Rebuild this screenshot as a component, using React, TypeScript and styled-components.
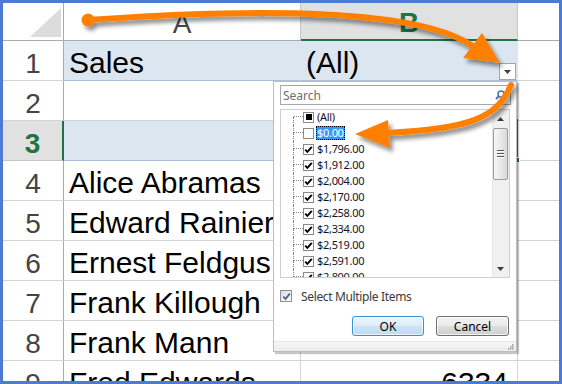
import React from 'react';
import styled, { createGlobalStyle } from 'styled-components';

const GlobalStyle = createGlobalStyle`
  html, body { margin: 0; padding: 0; background: #fff; }
  body { width: 562px; height: 384px; overflow: hidden; font-family: "Liberation Sans", Arial, sans-serif; }
  * { box-sizing: border-box; }
`;

const GREEN = '#217346';
const GRID = '#d4d4d4';

const Frame = styled.div`
  position: relative;
  width: 562px;
  height: 384px;
  border: 3px solid #4b7bd3;
  overflow: hidden;
  background: #fff;
`;

const Sheet = styled.div`
  display: grid;
  grid-template-columns: 61px 237px 217px 1fr;
  grid-template-rows: 38px;
  grid-auto-rows: 40px;
`;

const Corner = styled.div`
  display: flex;
  align-items: flex-end;
  justify-content: flex-end;
  padding: 0 2px 3px 0;
  border-right: 1px solid #ababab;
  border-bottom: 1px solid #ababab;
`;

const CornerTriangle = styled.div`
  width: 0;
  height: 0;
  border-left: 31px solid transparent;
  border-bottom: 29px solid #dcdcdc;
`;

const ColHeader = styled.div<{ $active?: boolean; $last?: boolean }>`
  display: flex;
  align-items: center;
  justify-content: center;
  padding-top: 4px;
  font-size: 28px;
  color: ${(p) => (p.$active ? GREEN : '#444')};
  font-weight: ${(p) => (p.$active ? 700 : 400)};
  background: ${(p) => (p.$active ? '#e1e1e1' : '#fff')};
  border-right: ${(p) => (p.$last ? 'none' : '1px solid #c6c6c6')};
  border-bottom: ${(p) => (p.$active ? `2px solid ${GREEN}` : '1px solid #ababab')};
`;

const RowHeader = styled.div<{ $active?: boolean }>`
  display: flex;
  align-items: center;
  justify-content: center;
  padding-top: 6px;
  font-size: 28px;
  color: ${(p) => (p.$active ? GREEN : '#444')};
  font-weight: ${(p) => (p.$active ? 700 : 400)};
  background: ${(p) => (p.$active ? '#e1e1e1' : '#fff')};
  border-right: ${(p) => (p.$active ? `2px solid ${GREEN}` : '1px solid #ababab')};
  border-bottom: 1px solid ${(p) => (p.$active ? '#c6c6c6' : GRID)};
`;

const Cell = styled.div<{ $pivot?: boolean; $right?: boolean; $open?: boolean; $last?: boolean }>`
  position: relative;
  display: flex;
  align-items: center;
  justify-content: ${(p) => (p.$right ? 'flex-end' : 'flex-start')};
  padding: 4px ${(p) => (p.$right ? '9px' : '5px')} 0 5px;
  font-size: 30px;
  color: #000;
  white-space: nowrap;
  overflow: ${(p) => (p.$open ? 'visible' : 'hidden')};
  background: ${(p) => (p.$pivot ? '#dce6f1' : '#fff')};
  border-bottom: 1px solid ${(p) => (p.$pivot ? '#a9bfdc' : GRID)};
  border-right: ${(p) => (p.$last ? 'none' : p.$pivot ? '1px solid transparent' : `1px solid ${GRID}`)};
`;

const DropButton = styled.div`
  align-self: flex-end;
  margin-left: auto;
  margin-right: -4px;
  width: 17px;
  height: 17px;
  border: 1px solid #a6a6a6;
  background: #fff;
  display: flex;
  align-items: center;
  justify-content: center;
`;

const Selection = styled.div`
  position: absolute;
  z-index: 1;
  top: -2px;
  left: -2px;
  right: -1px;
  bottom: -1px;
  border: 2px solid ${GREEN};
`;

const FillHandle = styled.div`
  position: absolute;
  right: -4px;
  bottom: -4px;
  width: 6px;
  height: 6px;
  background: ${GREEN};
  border: 1px solid #fff;
`;

/* ---------- Filter dropdown ---------- */

const Panel = styled.div`
  position: absolute;
  z-index: 2;
  left: 270px;
  top: 78px;
  width: 244px;
  height: 271px;
  display: flex;
  flex-direction: column;
  padding: 0 5px 0 6px;
  background: #fff;
  border: 1px solid #bdbdbd;
  box-shadow: 2px 2px 1px rgba(0, 0, 0, 0.22);
  font-family: "Noto Sans", "Open Sans", sans-serif;
`;

const SearchBox = styled.div`
  margin-top: 3px;
  height: 20px;
  display: flex;
  align-items: center;
  justify-content: space-between;
  padding: 0 5px 0 2px;
  border: 1px solid #a7a7a7;
  font-size: 12px;
  color: #6d6d6d;
`;

const ListBox = styled.div`
  margin-top: 4px;
  margin-right: 1px;
  height: 169px;
  display: flex;
  border: 1px solid #cfcfcf;
  overflow: hidden;
`;

const Tree = styled.div`
  flex: 1;
  margin-top: -1px;
  padding-left: 12px;
  overflow: hidden;
`;

const Item = styled.div`
  display: flex;
  align-items: center;
  height: 16px;
  flex-shrink: 0;
`;

const Connector = styled.div`
  width: 10px;
  height: 16px;
  display: flex;
  flex-direction: column;
`;

const ConnectorTop = styled.div<{ $first?: boolean }>`
  height: 8px;
  border-left: 1px dotted ${(p) => (p.$first ? 'transparent' : '#8a8a8a')};
  border-bottom: 1px dotted #8a8a8a;
`;

const ConnectorBottom = styled.div`
  flex: 1;
  border-left: 1px dotted #8a8a8a;
`;

const Box = styled.span`
  width: 11px;
  height: 11px;
  flex-shrink: 0;
  border: 1px solid #8a8a8a;
  background: #fff;
  display: flex;
  align-items: center;
  justify-content: center;
`;

const MixedMark = styled.span`
  width: 6px;
  height: 6px;
  background: #000;
`;

const ItemLabel = styled.span<{ $selected?: boolean }>`
  margin-left: 2px;
  padding: 0 1px;
  height: 14px;
  line-height: 13px;
  font-size: 11px;
  letter-spacing: -0.3px;
  white-space: nowrap;
  color: ${(p) => (p.$selected ? '#fff' : '#121228')};
  background: ${(p) => (p.$selected ? '#3399ff' : 'transparent')};
  outline: ${(p) => (p.$selected ? '1px dotted #000' : 'none')};
  outline-offset: -1px;
`;

const ScrollBar = styled.div`
  width: 17px;
  flex-shrink: 0;
  display: flex;
  flex-direction: column;
  align-items: center;
  padding: 0 2px 0 0;
  background: #f0f0f0;
  border-left: 1px solid #e9e9e9;
`;

const ScrollArrow = styled.div`
  height: 17px;
  width: 100%;
  display: flex;
  align-items: center;
  justify-content: center;
`;

const Thumb = styled.div`
  margin-top: 1px;
  width: 15px;
  height: 52px;
  border: 1px solid #9b9b9b;
  border-radius: 2px;
  background: linear-gradient(to right, #f6f6f6, #e9e9e9 50%, #d9d9d9);
  display: flex;
  flex-direction: column;
  align-items: center;
  justify-content: center;
  gap: 1px;
`;

const GripLine = styled.div`
  width: 7px;
  height: 1px;
  background: #5a5a5a;
  box-shadow: 0 1px 0 #fff;
  margin-bottom: 1px;
`;

const Track = styled.div`
  flex: 1;
`;

const CheckRow = styled.div`
  margin-top: 11px;
  height: 14px;
  display: flex;
  align-items: center;
  gap: 9px;
  font-size: 12px;
  letter-spacing: -0.35px;
  color: #3a3a3a;
`;

const WinCheck = styled.span`
  width: 12px;
  height: 12px;
  border: 1px solid #8e8f8f;
  background: linear-gradient(135deg, #dcdcdc, #fbfbfb);
  display: flex;
  align-items: center;
  justify-content: center;
`;

const ButtonRow = styled.div`
  margin-top: 13px;
  padding-right: 2px;
  display: flex;
  justify-content: flex-end;
  gap: 12px;
`;

const Button = styled.button<{ $default?: boolean; $w: number }>`
  width: ${(p) => p.$w}px;
  height: 20px;
  padding: 0;
  font-family: "Noto Sans", "Open Sans", sans-serif;
  font-size: 12px;
  color: #000;
  border-radius: 3px;
  border: 1px solid ${(p) => (p.$default ? '#3c8fd0' : '#707070')};
  background: ${(p) =>
    p.$default
      ? 'linear-gradient(#eaf5fc, #dcedf8 50%, #c9e3f5 51%, #bfdcf1)'
      : 'linear-gradient(#f2f2f2, #ebebeb 50%, #dddddd 51%, #cfcfcf)'};
  box-shadow: inset 0 0 0 1px rgba(255, 255, 255, 0.7);
`;

const Footer = styled.div`
  margin: auto -5px 0 -6px;
  height: 10px;
  border-top: 1px solid #e6e6e6;
  background: linear-gradient(#f6f6f6, #ececec);
  display: flex;
  justify-content: flex-end;
  align-items: flex-end;
  padding: 0 2px 1px 0;
`;

const Overlay = styled.svg`
  position: absolute;
  z-index: 5;
  left: -3px;
  top: -3px;
  pointer-events: none;
`;

type ItemState = 'checked' | 'unchecked' | 'mixed';
const items: { label: string; state: ItemState; selected?: boolean }[] = [
  { label: '(All)', state: 'mixed' },
  { label: '$0.00', state: 'unchecked', selected: true },
  { label: '$1,796.00', state: 'checked' },
  { label: '$1,912.00', state: 'checked' },
  { label: '$2,004.00', state: 'checked' },
  { label: '$2,170.00', state: 'checked' },
  { label: '$2,258.00', state: 'checked' },
  { label: '$2,334.00', state: 'checked' },
  { label: '$2,519.00', state: 'checked' },
  { label: '$2,591.00', state: 'checked' },
  { label: '$2,800.00', state: 'checked' },
];

const names: { n: number; a: string; b?: string }[] = [
  { n: 4, a: 'Alice Abramas' },
  { n: 5, a: 'Edward Rainier' },
  { n: 6, a: 'Ernest Feldgus' },
  { n: 7, a: 'Frank Killough' },
  { n: 8, a: 'Frank Mann' },
  { n: 9, a: 'Fred Edwards', b: '6334' },
];

const CheckGlyph = () => (
  <svg width="9" height="9" viewBox="0 0 9 9">
    <path d="M1.2 4.6 L3.4 6.9 L7.8 1.8" fill="none" stroke="#000" strokeWidth="1.9" />
  </svg>
);

const Tri = ({ up }: { up?: boolean }) => (
  <svg width="7" height="4" viewBox="0 0 7 4">
    <polygon points={up ? '0,4 7,4 3.5,0' : '0,0 7,0 3.5,4'} fill="#3c3c3c" />
  </svg>
);

export default function App() {
  return (
    <>
      <GlobalStyle />
      <Frame>
        <Sheet>
          <Corner>
            <CornerTriangle />
          </Corner>
          <ColHeader>A</ColHeader>
          <ColHeader $active>B</ColHeader>
          <ColHeader $last />

          <RowHeader>1</RowHeader>
          <Cell $pivot>Sales</Cell>
          <Cell $pivot>
            (All)
            <DropButton>
              <svg width="7" height="4" viewBox="0 0 7 4">
                <polygon points="0,0 7,0 3.5,4" fill="#444" />
              </svg>
            </DropButton>
          </Cell>
          <Cell $last />

          <RowHeader>2</RowHeader>
          <Cell />
          <Cell />
          <Cell $last />

          <RowHeader $active>3</RowHeader>
          <Cell $pivot />
          <Cell $pivot $open>
            <Selection>
              <FillHandle />
            </Selection>
          </Cell>
          <Cell $last />

          {names.map((r) => (
            <React.Fragment key={r.n}>
              <RowHeader>{r.n}</RowHeader>
              <Cell>{r.a}</Cell>
              <Cell $right>{r.b ?? ''}</Cell>
              <Cell $last />
            </React.Fragment>
          ))}
        </Sheet>

        <Panel>
          <SearchBox>
            <span>Search</span>
            <svg width="10" height="10" viewBox="0 0 10 10">
              <circle cx="6" cy="4" r="3" fill="none" stroke="#3d76b5" strokeWidth="1.5" />
              <line x1="4" y1="6" x2="1" y2="9" stroke="#3d76b5" strokeWidth="2" />
            </svg>
          </SearchBox>
          <ListBox>
            <Tree>
              {items.map((it, i) => (
                <Item key={it.label}>
                  <Connector>
                    <ConnectorTop $first={i === 0} />
                    <ConnectorBottom />
                  </Connector>
                  <Box>
                    {it.state === 'mixed' && <MixedMark />}
                    {it.state === 'checked' && <CheckGlyph />}
                  </Box>
                  <ItemLabel $selected={it.selected}>{it.label}</ItemLabel>
                </Item>
              ))}
            </Tree>
            <ScrollBar>
              <ScrollArrow>
                <Tri up />
              </ScrollArrow>
              <Thumb>
                <GripLine />
                <GripLine />
                <GripLine />
              </Thumb>
              <Track />
              <ScrollArrow>
                <Tri />
              </ScrollArrow>
            </ScrollBar>
          </ListBox>
          <CheckRow>
            <WinCheck>
              <svg width="9" height="9" viewBox="0 0 9 9">
                <path d="M1.3 4.5 L3.5 7 L7.8 1.6" fill="none" stroke="#3f5a8c" strokeWidth="1.7" />
              </svg>
            </WinCheck>
            <span>Select Multiple Items</span>
          </CheckRow>
          <ButtonRow>
            <Button $default $w={72}>OK</Button>
            <Button $w={73}>Cancel</Button>
          </ButtonRow>
          <Footer>
            <svg width="6" height="6" viewBox="0 0 6 6">
              <rect x="4" y="0" width="1.5" height="1.5" fill="#a0a0a0" />
              <rect x="2" y="2" width="1.5" height="1.5" fill="#a0a0a0" />
              <rect x="4" y="2" width="1.5" height="1.5" fill="#a0a0a0" />
              <rect x="0" y="4" width="1.5" height="1.5" fill="#a0a0a0" />
              <rect x="2" y="4" width="1.5" height="1.5" fill="#a0a0a0" />
              <rect x="4" y="4" width="1.5" height="1.5" fill="#a0a0a0" />
            </svg>
          </Footer>
        </Panel>

        <Overlay width="562" height="384" viewBox="0 0 562 384">
          <defs>
            <filter id="arrowShadow" x="-20%" y="-20%" width="140%" height="160%">
              <feDropShadow dx="3" dy="4" stdDeviation="2" floodColor="#000" floodOpacity="0.45" />
            </filter>
          </defs>
          <g filter="url(#arrowShadow)" fill="#ff8000" stroke="#ff8000">
            <path d="M88 20 C 260 8, 420 8, 474 47" fill="none" strokeWidth="6" strokeLinecap="round" />
            <circle cx="88" cy="20" r="6.5" stroke="none" />
            <polygon points="482,33 463,58 500,63" stroke="none" />
          </g>
          <g filter="url(#arrowShadow)" fill="#ff8000" stroke="#ff8000">
            <path d="M511 85 C 497 118, 470 129, 386 133" fill="none" strokeWidth="6" strokeLinecap="round" />
            <polygon points="355,134 388,120 390,148" stroke="none" />
          </g>
        </Overlay>
      </Frame>
    </>
  );
}
